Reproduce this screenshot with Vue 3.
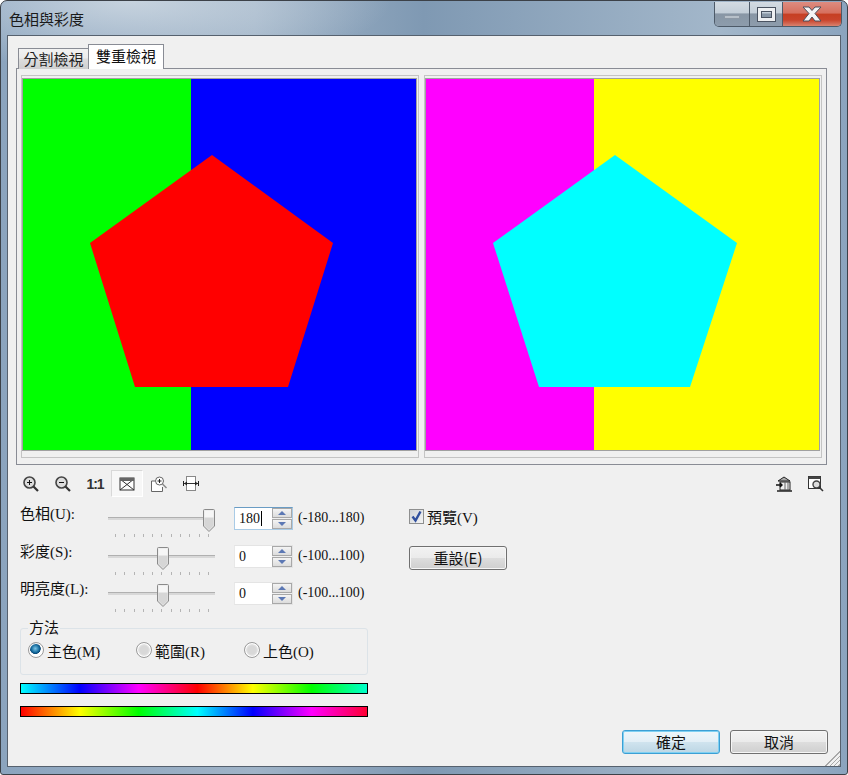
<template>
  <div class="window">
    <div class="titlebar">
      <span class="title">色相與彩度</span>
      <div class="caption">
        <div class="cap cap-min"><span class="min-bar"></span></div>
        <div class="cap cap-max"><span class="max-box"></span></div>
        <div class="cap cap-close">
          <svg width="24" height="16" viewBox="0 0 24 16">
            <path d="M3 1h6l3 3.5L15 1h6l-6 6.5L21 15h-6l-3-4-3 4H3l6-7.5z" fill="#f4f4f4" stroke="#4a4f5c" stroke-width="1" />
          </svg>
        </div>
      </div>
    </div>

    <div class="client">
      <div class="tabs">
        <div class="tab">分割檢視</div>
        <div class="tab tab-on">雙重檢視</div>
      </div>
      <div class="pane">
        <div class="view">
          <svg class="canvas" viewBox="0 0 393 371" width="393" height="371">
            <rect width="168" height="371" fill="#00ff00" />
            <rect x="168" width="226" height="371" fill="#0000ff" />
            <polygon points="189,76 310,164 265,308 112,308 67,164" fill="#ff0000" />
          </svg>
        </div>
        <div class="view">
          <svg class="canvas" viewBox="0 0 393 371" width="393" height="371">
            <rect width="168" height="371" fill="#ff00ff" />
            <rect x="168" width="226" height="371" fill="#ffff00" />
            <polygon points="189,76 311,164 264,308 113,308 67,164" fill="#00ffff" />
          </svg>
        </div>
      </div>

      <div class="toolbar">
        <div class="tool">
          <svg width="18" height="18" viewBox="0 0 18 18"><circle cx="7.5" cy="7.5" r="5.5" fill="#ddd" stroke="#444" stroke-width="1.6" /><path d="M5 7.5h5M7.5 5v5" stroke="#111" /><path d="M11.5 11.5l4.5 4.5" stroke="#333" stroke-width="2.2" /></svg>
        </div>
        <div class="tool">
          <svg width="18" height="18" viewBox="0 0 18 18"><circle cx="7.5" cy="7.5" r="5.5" fill="#ddd" stroke="#444" stroke-width="1.6" /><path d="M5 7.5h5" stroke="#111" /><path d="M11.5 11.5l4.5 4.5" stroke="#333" stroke-width="2.2" /></svg>
        </div>
        <div class="tool tool-text">1:1</div>
        <div class="tool tool-on">
          <svg width="16" height="14" viewBox="0 0 16 14">
            <rect x="1" y="1" width="14" height="12" fill="#fff" stroke="#333" />
            <path d="M1 2l14 11M15 2L1 13" stroke="#333" />
            <rect x="1" y="1" width="14" height="3" fill="#666" />
          </svg>
        </div>
        <div class="tool">
          <svg width="18" height="18" viewBox="0 0 18 18"><path d="M5 6H1.5v10.5h11V12" fill="#fff" stroke="#666" /><circle cx="9.5" cy="6" r="4" fill="#fff" stroke="#666" /><path d="M7.5 6h4M9.5 4v4" stroke="#222" /><path d="M12.5 9l4 4" stroke="#888" stroke-width="1.5" /></svg>
        </div>
        <div class="tool">
          <svg width="18" height="18" viewBox="0 0 18 18"><rect x="4.5" y="1.5" width="9" height="14" fill="#fff" stroke="#888" /><path d="M1 8.5h16" stroke="#333" /><path d="M1.5 6v5M16.5 6v5" stroke="#222" /><path d="M2 8.5l3-2v4zM16 8.5l-3-2v4z" fill="#222" /></svg>
        </div>
        <div class="tool tool-right">
          <svg width="18" height="18" viewBox="0 0 18 18"><path d="M3 6l6-4 6 4z" fill="#aaa" stroke="#222" /><rect x="5" y="7" width="10" height="8" fill="#eee" stroke="#222" /><path d="M2 16h15" stroke="#222" stroke-width="1.5" /><path d="M1 10h6M5 8l2 2-2 2" fill="none" stroke="#111" stroke-width="1.4" /><path d="M10 7v8M13 7v8" stroke="#666" /></svg>
        </div>
        <div class="tool">
          <svg width="18" height="18" viewBox="0 0 18 18"><rect x="1.5" y="1.5" width="12" height="12" fill="#fff" stroke="#333" /><rect x="1.5" y="1.5" width="12" height="2.5" fill="#444" /><circle cx="9.5" cy="9.5" r="3.5" fill="#ddd" stroke="#444" stroke-width="1.4" /><path d="M12 12l4 4" stroke="#333" stroke-width="1.6" /></svg>
        </div>
      </div>

      <div class="body">
        <div class="col-left">
          <div v-for="row in rows" :key="row.label" class="adjust">
            <span class="adjust-label">{{ row.label }}</span>
            <div class="slider">
              <div class="track"></div>
              <svg class="thumb" :style="{ left: row.thumb + 'px' }" width="12" height="23" viewBox="0 0 12 23">
                <path d="M1.5.5h9a1 1 0 0 1 1 1V17L6 22.5.5 17V1.5a1 1 0 0 1 1-1z" fill="#e6e6e6" stroke="#8a8a8a" />
                <path d="M1.5 1.500h9V8h-9z" fill="#f6f6f6" />
                <path d="M1.5 9h9v7.500L6 21l-4.500-4.500z" fill="#d6d6d6" />
              </svg>
              <div class="ticks"><i v-for="n in 11" :key="n"></i></div>
            </div>
            <div class="spin" :class="{ 'spin-focus': row.focus }">
              <span class="spin-value">{{ row.value }}<span v-if="row.focus" class="cursor"></span></span>
              <div class="spin-btns">
                <div class="spin-btn"><span class="arrow-up"></span></div>
                <div class="spin-btn"><span class="arrow-down"></span></div>
              </div>
            </div>
            <span class="range">{{ row.range }}</span>
          </div>

          <fieldset class="method">
            <legend>方法</legend>
            <label v-for="m in methods" :key="m.label" class="radio-item">
              <span class="radio" :class="{ 'radio-on': m.on }"></span>{{ m.label }}
            </label>
          </fieldset>

          <div class="hue-bar hue-shifted"></div>
          <div class="hue-bar hue-base"></div>
        </div>

        <div class="col-right">
          <label class="check-item">
            <span class="check">
              <svg width="13" height="13" viewBox="0 0 13 13"><path d="M2.5 6.500l3 4L10.500 1.500" fill="none" stroke="#2f4f9e" stroke-width="2.400" /></svg>
            </span>預覽(V)
          </label>
          <button class="btn btn-reset">重設(E)</button>
          <div class="footer">
            <button class="btn btn-default">確定</button>
            <button class="btn">取消</button>
          </div>
        </div>
      </div>
      <div class="grip"></div>
    </div>
  </div>
</template>

<script setup>
const rows = [
  { label: '色相(U):', value: '180', range: '(-180...180)', thumb: 95, focus: true },
  { label: '彩度(S):', value: '0', range: '(-100...100)', thumb: 49 },
  { label: '明亮度(L):', value: '0', range: '(-100...100)', thumb: 49 },
]

const methods = [
  { label: '主色(M)', on: true },
  { label: '範圍(R)' },
  { label: '上色(O)' },
]
</script>

<style>
html, body { margin: 0; background: #fff; }
</style>

<style scoped>
.window {
  width: 848px;
  height: 775px;
  box-sizing: border-box;
  display: flex;
  flex-direction: column;
  padding: 0 6px 7px 6px;
  border: 1px solid #3c4148;
  border-radius: 7px 7px 3px 3px;
  background:
    radial-gradient(ellipse 260px 70px at 130px 0, rgba(215, 224, 232, .75), transparent),
    linear-gradient(90deg, #8ba4be 0, #9fb3c7 30%, #7f99b3 50%, #a3b7ca 85%, #8ba4be 100%);
  font-family: "Liberation Serif", "Noto Sans CJK TC", serif;
  font-size: 15px;
  color: #111;
  overflow: hidden;
}
.titlebar {
  height: 34px;
  flex: none;
  display: flex;
  justify-content: space-between;
  align-items: flex-start;
  margin-left: 2px;
}
.title {
  font-family: "Noto Sans CJK TC", sans-serif;
  font-size: 15px;
  line-height: 15px;
  margin-top: 10px;
  color: #1a1a1a;
}
.caption {
  display: flex;
  height: 24px;
  margin-top: 1px;
  margin-right: -1px;
  border: 1px solid #4d5a68;
  border-top: none;
  border-radius: 0 0 5px 5px;
  overflow: hidden;
}
.cap {
  display: flex;
  align-items: center;
  justify-content: center;
  border-right: 1px solid #4d5a68;
}
.cap-min, .cap-max {
  background: linear-gradient(#d3dbe2 0, #c3ced8 45%, #8896a5 50%, #8d9cac 100%);
}
.cap-min { width: 34px; }
.cap-max { width: 32px; }
.cap-close {
  width: 58px;
  border-right: none;
  background: linear-gradient(#dd8c80 0, #d6705f 45%, #c63f23 52%, #c9442c 75%, #d9826f 100%);
}
.min-bar {
  width: 16px;
  height: 4px;
  margin-top: 6px;
  background: #b7c0c9;
  border: 1px solid #8d98a5;
  box-sizing: border-box;
}
.max-box {
  width: 17px;
  height: 13px;
  box-sizing: border-box;
  border: 3px solid #eef0f2;
  outline: 1px solid #4a5361;
  box-shadow: inset 0 0 0 1px #4a5361;
}
.client {
  flex: 1;
  position: relative;
  box-sizing: border-box;
  background: #f0f0f0;
  border: 1px solid #56616e;
  display: flex;
  flex-direction: column;
  padding: 8px 13px 0 8px;
  min-height: 0;
}
.tabs {
  display: flex;
  align-items: flex-end;
  height: 25px;
  padding-left: 2px;
  flex: none;
  margin-bottom: -1px;
  position: relative;
  z-index: 1;
}
.tab {
  height: 21px;
  width: 71px;
  box-sizing: border-box;
  text-align: center;
  line-height: 19px;
  font-family: "Noto Sans CJK TC", sans-serif;
  font-size: 15px;
  color: #222;
  border: 1px solid #898c95;
  border-bottom: none;
  background: linear-gradient(#f2f2f2 0, #ebebeb 45%, #dddddd 50%, #cfcfcf 100%);
}
.tab-on {
  height: 25px;
  width: 76px;
  line-height: 22px;
  margin-left: -1px;
  background: #fff;
  color: #111;
}
.pane {
  flex: none;
  box-sizing: border-box;
  height: 397px;
  border: 1px solid #898c95;
  display: flex;
  gap: 5px;
  padding: 6px 4px 5px 4px;
}
.view {
  width: 398px;
  height: 383px;
  box-sizing: border-box;
  border: 1px solid #c4c4c4;
  padding: 3px 1px 0;
}
.canvas {
  display: block;
  outline: 1px solid #a0a0a0;
}
.toolbar {
  flex: none;
  display: flex;
  align-items: center;
  height: 27px;
  margin: 5px -5px 10px -1px;
}
.tool {
  width: 32px;
  height: 27px;
  display: flex;
  align-items: center;
  justify-content: center;
  box-sizing: border-box;
}
.tool-text {
  font-family: "Liberation Sans", sans-serif;
  font-size: 14px;
  font-weight: bold;
  letter-spacing: -1px;
  color: #333;
}
.tool-on {
  background: #f7f7f7;
  border: 1px solid #d8d8d8;
  border-right-color: #fff;
  border-bottom-color: #fff;
}
.tool-right { margin-left: auto; }
.body {
  flex: none;
  display: flex;
  height: 247px;
  padding-left: 4px;
}
.col-left {
  width: 348px;
  flex: none;
}
.adjust {
  display: flex;
  align-items: flex-start;
  height: 37.5px;
}
.adjust-label {
  width: 88px;
  line-height: 15px;
  flex: none;
  white-space: nowrap;
}
.slider {
  position: relative;
  width: 107px;
  height: 34px;
  flex: none;
  margin-right: 19px;
}
.track {
  position: absolute;
  left: 0;
  right: 0;
  top: 10px;
  height: 3px;
  background: #d8d8d8;
  border-top: 1px solid #b0b0b0;
  box-sizing: border-box;
}
.thumb {
  position: absolute;
  top: 2px;
}
.ticks {
  position: absolute;
  left: 7px;
  width: 94px;
  top: 27px;
  display: flex;
  justify-content: space-between;
}
.ticks i {
  width: 1px;
  height: 3px;
  background: #b4b4b4;
}
.spin {
  width: 59px;
  height: 23px;
  box-sizing: border-box;
  display: flex;
  border: 1px solid #e4e4e4;
  border-left-color: #e8e8e8;
  background: #fff;
  flex: none;
  font-size: 14px;
}
.spin-focus {
  border-color: #a9cbe6;
  border-top-color: #6a9cc4;
}
.spin-value {
  flex: 1;
  padding-left: 4px;
  line-height: 21px;
  display: flex;
  align-items: center;
}
.cursor {
  width: 1px;
  height: 15px;
  background: #000;
  margin-left: 1px;
}
.spin-btns {
  width: 20px;
  display: flex;
  flex-direction: column;
  gap: 1px;
  background: #f0f0f0;
}
.spin-btn {
  flex: 1;
  display: flex;
  align-items: center;
  justify-content: center;
  border: 1px solid #a8a8a8;
  background: linear-gradient(#f4f4f4, #dcdcdc);
}
.arrow-up {
  border: 4px solid transparent;
  border-top: none;
  border-bottom: 4px solid #5c78b4;
}
.arrow-down {
  border: 4px solid transparent;
  border-bottom: none;
  border-top: 4px solid #5c78b4;
}
.range {
  margin-left: 5px;
  font-size: 14px;
  line-height: 21px;
  white-space: nowrap;
}
.method {
  box-sizing: border-box;
  width: 348px;
  height: 54px;
  margin: 1.5px 0 0;
  padding: 6px 7px 0;
  border: 1px solid #dce3e8;
  border-radius: 3px;
  display: flex;
  gap: 0;
}
.method legend {
  padding: 0 1px;
  margin-left: 0;
  line-height: 14px;
}
.radio-item {
  display: flex;
  align-items: center;
  height: 18px;
  width: 108px;
}
.radio {
  width: 16px;
  height: 16px;
  box-sizing: border-box;
  margin-right: 3px;
  border: 1px solid #9a9a9a;
  border-radius: 50%;
  background: radial-gradient(circle at 50% 50%, #d8d8d8 0 40%, #eee 70%, #f8f8f8);
  box-shadow: inset 0 0 0 1px #fff;
}
.radio-on {
  background: radial-gradient(circle at 45% 40%, #7cc6e8 0, #12699c 35%, #0c4a78 45%, #fff 50%, #f0f0f0 100%);
}
.hue-bar {
  box-sizing: border-box;
  height: 11px;
  border: 1px solid #000;
}
.hue-shifted {
  margin-top: 8px;
  background: linear-gradient(90deg, #00ffff, #0000ff 17%, #ff00ff 34%, #ff0000 51%, #ffff00 67%, #00ff00 84%, #00ffcc);
}
.hue-base {
  margin-top: 12px;
  background: linear-gradient(90deg, #ff0000, #ffff00 17%, #00ff00 34%, #00ffff 51%, #0000ff 67%, #ff00ff 84%, #ff0033);
}
.col-right {
  flex: 1;
  margin-left: 41px;
  display: flex;
  flex-direction: column;
  align-items: flex-start;
}
.check-item {
  display: flex;
  align-items: center;
  height: 18px;
}
.check {
  width: 15px;
  height: 15px;
  box-sizing: border-box;
  margin-right: 3px;
  border: 1px solid #8e8f8f;
  background: linear-gradient(135deg, #cfd3d8, #f4f4f4);
  display: flex;
  align-items: center;
  justify-content: center;
}
.btn {
  width: 98px;
  height: 24px;
  box-sizing: border-box;
  padding: 0;
  border: 1px solid #707070;
  border-radius: 3px;
  font-family: "Noto Sans CJK TC", sans-serif;
  font-size: 15px;
  line-height: 20px;
  color: #111;
  background: linear-gradient(#f2f2f2 0, #ebebeb 48%, #dddddd 52%, #cfcfcf 100%);
  box-shadow: inset 0 0 0 1px #f6f6f6;
}
.btn-reset {
  margin-top: 21px;
}
.footer {
  display: flex;
  gap: 10px;
  margin-top: auto;
  align-self: flex-end;
  margin-right: -1px;
}
.btn-default {
  border-color: #3c9fd4;
  background: linear-gradient(#eef6fa 0, #e3eff6 48%, #cfe3ee 52%, #bcd6e4 100%);
  box-shadow: inset 0 0 0 1px #7fd0f2;
}
.grip {
  position: absolute;
  right: 0;
  bottom: 0;
  width: 16px;
  height: 16px;
  background: repeating-linear-gradient(135deg, #a8a8a8 0 1px, #f0f0f0 1px 3px);
  clip-path: polygon(100% 0, 100% 100%, 0 100%);
}
</style>
